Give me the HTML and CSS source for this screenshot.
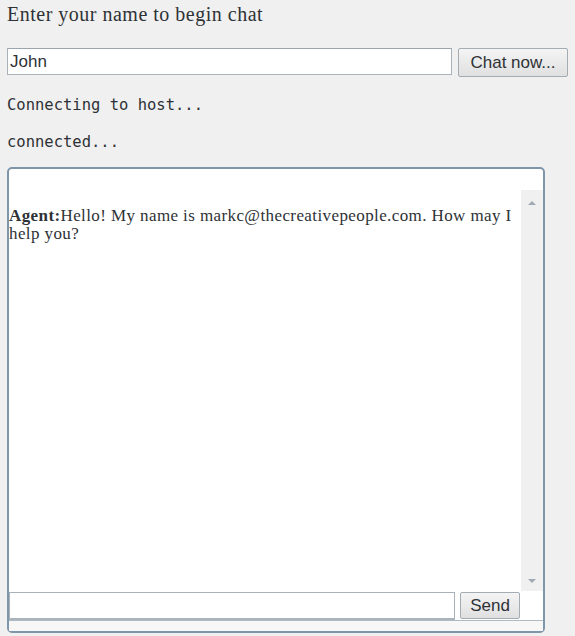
FILE: index.html
```html
<!DOCTYPE html>
<html>
<head>
<meta charset="utf-8">
<link rel="stylesheet" href="styles.css">
</head>
<body>
<div class="page">
  <h1 class="title">Enter your name to begin chat</h1>
  <div class="name-row">
    <input class="name-input" type="text" value="John">
    <button class="btn chat-btn">Chat now...</button>
  </div>
  <p class="status status-first">Connecting to host...</p>
  <p class="status">connected...</p>
  <div class="chat">
    <div class="log">
      <div class="msgs">
        <p class="msg"><b>Agent:</b>Hello! My name is markc@thecreativepeople.com. How may I help you?</p>
      </div>
      <div class="scroll">
        <span class="arrow up"></span>
        <span class="arrow down"></span>
      </div>
    </div>
    <div class="send-row">
      <input class="send-input" type="text">
      <button class="btn send-btn">Send</button>
    </div>
    <div class="chat-foot"></div>
  </div>
</div>
</body>
</html>
```
FILE: styles.css
```css
html, body {
  margin: 0;
  padding: 0;
  background: #f0f0f0;
}
.page {
  padding: 0 7px;
  color: #2e3236;
}
.title {
  margin: 0;
  padding-top: 3px;
  font-family: "Liberation Serif", serif;
  font-weight: normal;
  font-size: 20px;
  letter-spacing: 0.5px;
  line-height: 23px;
}
.name-row {
  display: flex;
  gap: 6px;
  margin-top: 22px;
  align-items: flex-start;
}
.name-input {
  width: 445px;
  height: 27px;
  box-sizing: border-box;
  border: 1px solid #a9b2ba;
  border-top-color: #9aa5ae;
  background: #fff;
  padding: 0 2px;
  font-family: "Liberation Sans", sans-serif;
  font-size: 17px;
  color: #2e3236;
  margin: 0;
}
.btn {
  box-sizing: border-box;
  border: 1px solid #a4acb4;
  border-radius: 2px;
  background: linear-gradient(#f4f4f4, #e0e0e0);
  font-family: "Liberation Sans", sans-serif;
  font-size: 17px;
  color: #2e3236;
  margin: 0;
  padding: 0;
}
.chat-btn {
  width: 110px;
  height: 29px;
}
.status {
  margin: 0;
  font-family: "DejaVu Sans Mono", monospace;
  font-size: 15.5px;
  line-height: 20px;
  color: #2e3236;
}
.status-first {
  margin-top: 18px;
}
.status + .status {
  margin-top: 17px;
}
.chat {
  margin-top: 15px;
  width: 538px;
  height: 466px;
  box-sizing: border-box;
  border: 2px solid #7f95aa;
  border-radius: 5px;
  background: #fff;
  display: flex;
  flex-direction: column;
  padding-top: 21px;
}
.log {
  flex: 1;
  display: flex;
  min-height: 0;
}
.msgs {
  flex: 1;
  padding-top: 17px;
}
.msg {
  margin: 0;
  font-family: "Liberation Serif", serif;
  font-size: 17px;
  letter-spacing: 0.4px;
  line-height: 18px;
  color: #2e3236;
  padding-right: 4px;
}
.msg b {
  font-weight: bold;
}
.scroll {
  width: 22px;
  background: #f0f0f0;
  display: flex;
  flex-direction: column;
  justify-content: space-between;
  align-items: center;
  padding: 11px 0 8px;
  box-sizing: border-box;
}
.arrow {
  width: 0;
  height: 0;
  border-left: 4px solid transparent;
  border-right: 4px solid transparent;
}
.arrow.up {
  border-bottom: 4px solid #a0aab4;
}
.arrow.down {
  border-top: 4px solid #a0aab4;
}
.send-row {
  display: flex;
  gap: 5px;
  align-items: center;
  height: 29px;
}
.send-input {
  width: 446px;
  height: 28px;
  box-sizing: border-box;
  border: 1px solid #a9b2ba;
  border-bottom: 2px solid #a9b4bc;
  background: #fff;
  margin: 0;
  padding: 0 2px;
}
.send-btn {
  width: 60px;
  height: 27px;
}
.chat-foot {
  flex: 1;
  max-height: 10px;
  background: #f7f7f7;
  border-top: 1px solid #b0bac2;
}
```
